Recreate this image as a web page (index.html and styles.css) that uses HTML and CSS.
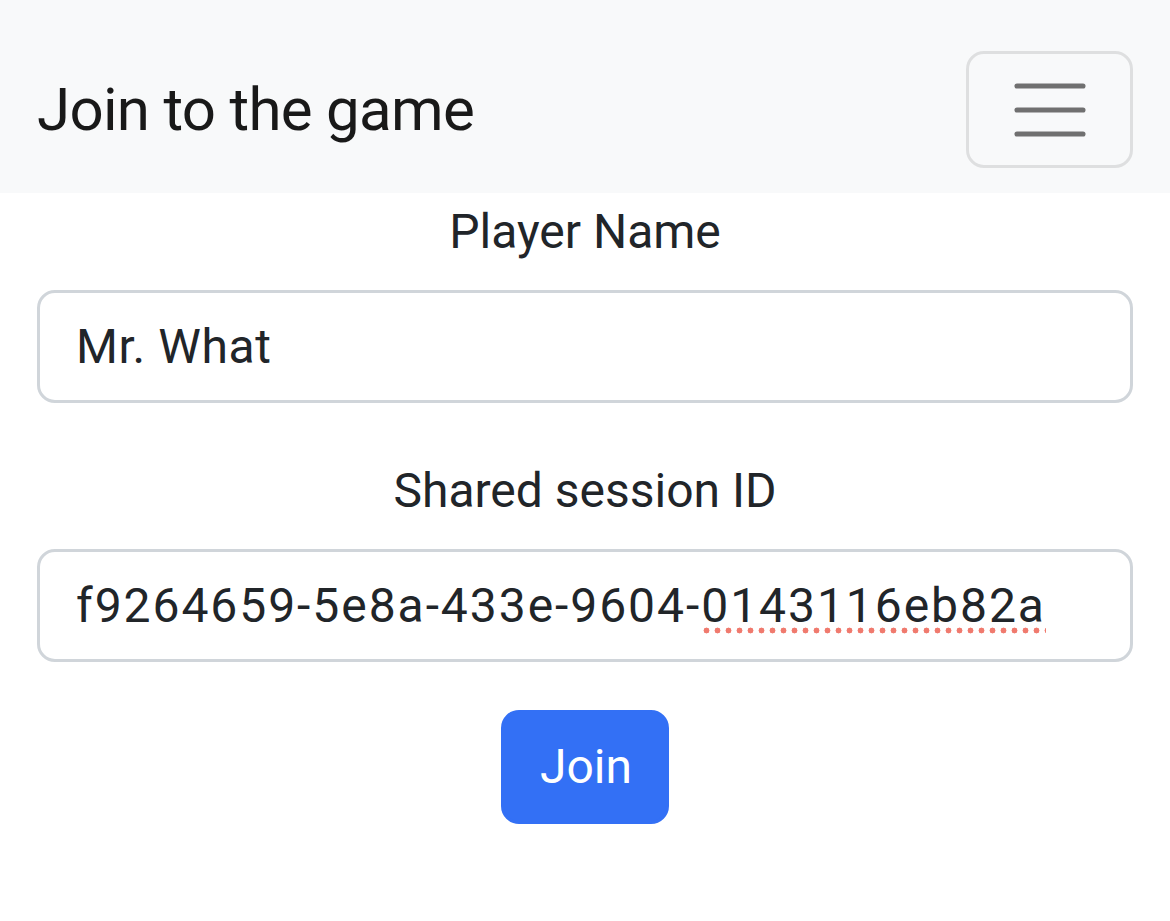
FILE: index.html
```html
<!DOCTYPE html>
<html lang="en">
<head>
<meta charset="utf-8">
<title>Join to the game</title>
<link rel="stylesheet" href="styles.css">
</head>
<body>
<nav class="navbar">
  <span class="brand">Join to the game</span>
  <button class="toggler" type="button" aria-label="Toggle navigation">
    <svg class="toggler-icon" viewBox="0 0 30 30" width="90" height="90" aria-hidden="true">
      <path d="M4 7h22M4 15h22M4 23h22" stroke="#707070" stroke-width="1.7" stroke-linecap="round" fill="none"/>
    </svg>
  </button>
</nav>
<main class="content">
  <div class="field">
    <label class="label" for="player">Player Name</label>
    <input class="control" id="player" type="text" value="Mr. What">
  </div>
  <div class="field">
    <label class="label" for="session">Shared session ID</label>
    <div class="control control-id" id="session" role="textbox">f9264659-5e8a-433e-9604-<span class="misspelled">0143116eb82a</span></div>
  </div>
  <div class="actions">
    <button class="btn-primary" type="button">Join</button>
  </div>
</main>
</body>
</html>
```

FILE: styles.css
```css
* { box-sizing: border-box; }

html, body {
  margin: 0;
  padding: 0;
  background: #ffffff;
}

body {
  font-family: Roboto, "Liberation Sans", Arial, sans-serif;
  color: #212529;
  font-size: 48px;
  line-height: 1.5;
}

.navbar {
  height: 193px;
  background: #f8f9fa;
  display: flex;
  align-items: center;
  justify-content: space-between;
  padding: 51px 37px 25px 37px;
}

.brand {
  font-size: 60px;
  line-height: 90px;
  letter-spacing: -0.7px;
  color: rgba(0, 0, 0, 0.9);
}

.toggler {
  width: 167px;
  height: 117px;
  padding: 0;
  border: 3px solid rgba(0, 0, 0, 0.1);
  border-radius: 18px;
  background: transparent;
  display: flex;
  align-items: center;
  justify-content: center;
}

.toggler-icon {
  display: block;
}

.content {
  padding: 3px 37px 0 37px;
  display: flex;
  flex-direction: column;
}

.field {
  display: flex;
  flex-direction: column;
  margin-bottom: 52px;
}

.label {
  text-align: center;
  margin-bottom: 22px;
  line-height: 72px;
}

.control {
  display: block;
  width: 100%;
  height: 113px;
  padding: 0 36px;
  font-family: inherit;
  font-size: 48px;
  line-height: 107px;
  letter-spacing: 0.6px;
  color: #212529;
  background: #ffffff;
  border: 3px solid #d0d5da;
  border-radius: 18px;
  outline: none;
  white-space: nowrap;
}

.control-id {
  letter-spacing: 1.95px;
}

.misspelled {
  background-image: radial-gradient(circle, #f07a6e 2.7px, transparent 3.2px);
  background-repeat: repeat-x;
  background-size: 11px 7px;
  background-position: 0 100%;
}

.actions {
  display: flex;
  justify-content: center;
  margin-top: -4px;
}

.btn-primary {
  font-family: inherit;
  font-size: 48px;
  line-height: 72px;
  color: #ffffff;
  background: #3370f5;
  border: 3px solid #3370f5;
  border-radius: 18px;
  padding: 18px 36px;
  width: 168px;
  height: 114px;
}
```
